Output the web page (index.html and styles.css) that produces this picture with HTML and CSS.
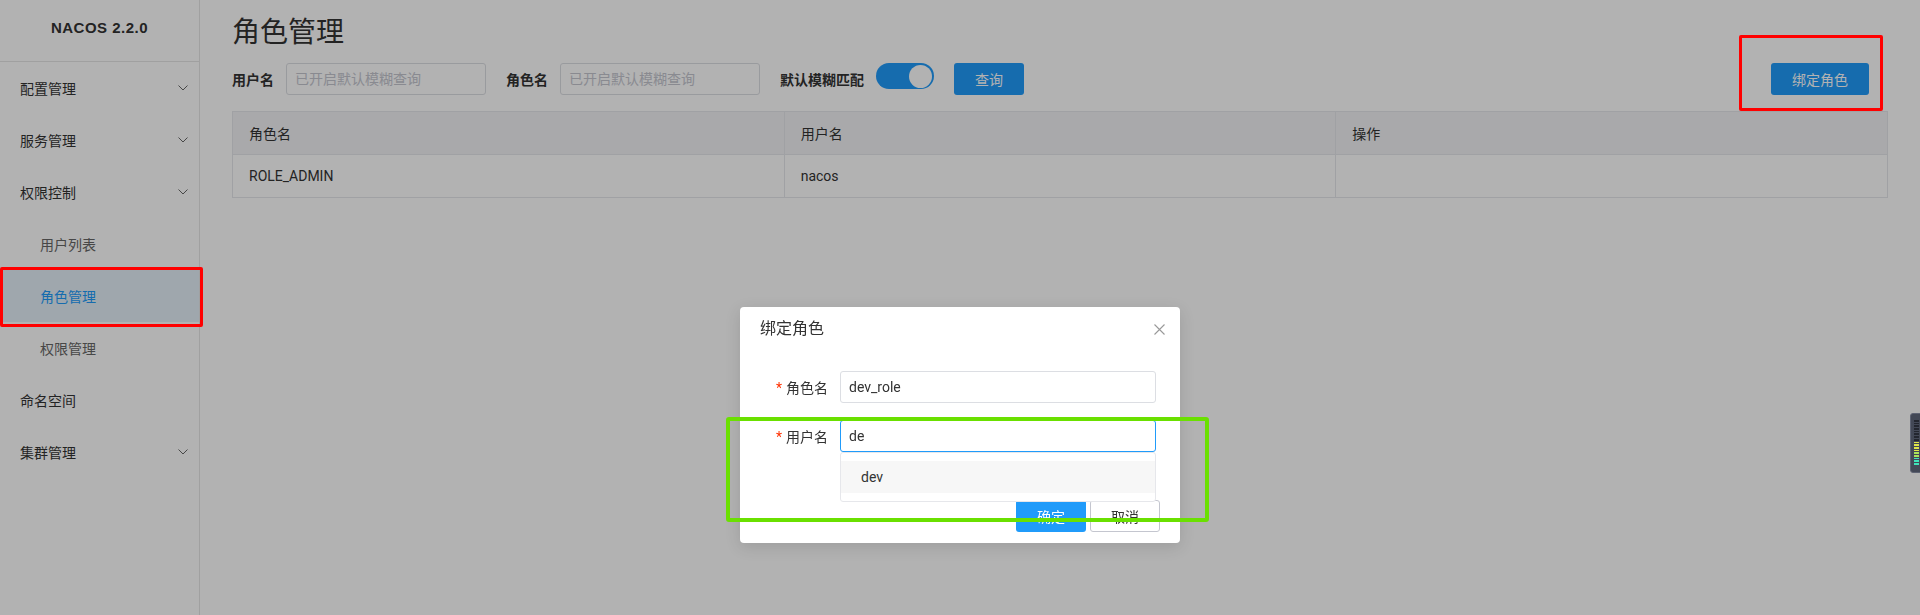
FILE: index.html
```html
<!DOCTYPE html>
<html lang="zh-CN">
<head>
<meta charset="utf-8">
<title>角色管理 - Nacos</title>
<link rel="stylesheet" href="styles.css">
</head>
<body>
<div class="app">
  <aside class="sidebar">
    <div class="logo">NACOS 2.2.0</div>
    <ul class="menu">
      <li class="menu-item"><span>配置管理</span><svg class="chev" width="10" height="6" viewBox="0 0 10 6"><path d="M0.5 0.5 L5 5 L9.5 0.5" fill="none" stroke="currentColor" stroke-width="1"/></svg></li>
      <li class="menu-item"><span>服务管理</span><svg class="chev" width="10" height="6" viewBox="0 0 10 6"><path d="M0.5 0.5 L5 5 L9.5 0.5" fill="none" stroke="currentColor" stroke-width="1"/></svg></li>
      <li class="menu-item"><span>权限控制</span><svg class="chev" width="10" height="6" viewBox="0 0 10 6"><path d="M0.5 0.5 L5 5 L9.5 0.5" fill="none" stroke="currentColor" stroke-width="1"/></svg></li>
      <li class="menu-item sub"><span>用户列表</span></li>
      <li class="menu-item sub active"><span>角色管理</span></li>
      <li class="menu-item sub"><span>权限管理</span></li>
      <li class="menu-item"><span>命名空间</span></li>
      <li class="menu-item"><span>集群管理</span><svg class="chev" width="10" height="6" viewBox="0 0 10 6"><path d="M0.5 0.5 L5 5 L9.5 0.5" fill="none" stroke="currentColor" stroke-width="1"/></svg></li>
    </ul>
  </aside>
  <main class="main">
    <h1 class="page-title">角色管理</h1>
    <div class="search">
      <label class="s-label">用户名</label>
      <input class="s-input" placeholder="已开启默认模糊查询">
      <label class="s-label">角色名</label>
      <input class="s-input" placeholder="已开启默认模糊查询">
      <label class="s-label">默认模糊匹配</label>
      <span class="switch"><span class="knob"></span></span>
      <button class="btn primary query">查询</button>
      <button class="btn primary bind">绑定角色</button>
    </div>
    <table class="grid">
      <thead>
        <tr><th>角色名</th><th>用户名</th><th>操作</th></tr>
      </thead>
      <tbody>
        <tr><td>ROLE_ADMIN</td><td>nacos</td><td></td></tr>
      </tbody>
    </table>
  </main>
</div>

<div class="mask"></div>
<div class="mark-red mark-menu"></div>
<div class="mark-red mark-bind"></div>

<div class="dialog">
  <div class="dlg-head">绑定角色
    <svg class="close" width="11" height="11" viewBox="0 0 11 11"><path d="M0.5 0.5 L10.5 10.5 M10.5 0.5 L0.5 10.5" stroke="#999" stroke-width="1.1" fill="none"/></svg>
  </div>
  <div class="dlg-body">
    <div class="f-item">
      <label class="f-label"><i class="req">*</i>角色名</label>
      <div class="f-ctrl"><input class="f-input" value="dev_role"></div>
    </div>
    <div class="f-item">
      <label class="f-label"><i class="req">*</i>用户名</label>
      <div class="f-ctrl">
        <input class="f-input focused" value="de">
        <ul class="dropdown"><li class="dd-item">dev</li></ul>
      </div>
    </div>
  </div>
  <div class="dlg-foot">
    <button class="btn primary">确定</button>
    <button class="btn normal">取消</button>
  </div>
</div>

<div class="mark-green"></div>

<div class="meter">
  <span class="bar off"></span><span class="bar off"></span><span class="bar off"></span><span class="bar off"></span><span class="bar off"></span><span class="bar off"></span><span class="bar off"></span><span class="bar off"></span>
  <span class="bar yel"></span><span class="bar yel"></span><span class="bar yel"></span><span class="bar yel"></span>
  <span class="bar lime"></span><span class="bar lime"></span>
  <span class="bar teal"></span><span class="bar teal"></span><span class="bar teal"></span>
</div>
</body>
</html>
```

FILE: styles.css
```css
* { box-sizing: border-box; }
html, body { margin: 0; padding: 0; }
body {
  width: 1920px;
  height: 615px;
  overflow: hidden;
  background: #fff;
  font-family: Roboto, "Noto Sans CJK SC", sans-serif;
  font-size: 14px;
  color: #333;
}

.app {
  display: flex;
  height: 615px;
}

/* Sidebar */
.sidebar {
  width: 200px;
  flex: none;
  border-right: 1px solid #e6e6e6;
  background: #fff;
}
.logo {
  height: 62px;
  border-bottom: 1px solid #e6e6e6;
  text-align: center;
  line-height: 56px;
  font-family: "Liberation Sans", Arial, sans-serif;
  font-weight: bold;
  font-size: 15px;
  letter-spacing: 0.5px;
  color: #333;
}
.menu {
  list-style: none;
  margin: 0;
  padding: 0;
}
.menu-item {
  height: 52px;
  display: flex;
  align-items: center;
  justify-content: space-between;
  padding: 0 11px 0 20px;
  font-size: 14px;
  color: #333;
}
.menu-item.sub {
  padding-left: 40px;
  color: #666;
}
.menu-item.active {
  background: #e4f0f8;
  color: #209bfa;
}
.chev { color: #666; display: block; }

/* Main */
.main {
  flex: 1;
  padding: 0 32px;
  min-width: 0;
}
.page-title {
  margin: 13px 0 0;
  height: 40px;
  line-height: 40px;
  font-size: 28px;
  font-weight: normal;
  color: #333;
}
.search {
  display: flex;
  align-items: center;
  height: 32px;
  margin-top: 10px;
}
.s-label {
  font-weight: bold;
  font-size: 14px;
  color: #333;
  padding-right: 12px;
}
.s-input {
  width: 200px;
  height: 32px;
  border: 1px solid #dcdee3;
  border-radius: 3px;
  padding: 0 8px;
  font: inherit;
  font-size: 14px;
  margin-right: 20px;
  outline: none;
}
.s-input::placeholder { color: #c4c6cf; }

.switch {
  align-self: flex-start;
  width: 58px;
  height: 26px;
  border-radius: 13px;
  background: #209bfa;
  display: flex;
  align-items: center;
  justify-content: flex-end;
  padding-right: 2px;
  margin-right: 20px;
}
.knob {
  width: 23px;
  height: 23px;
  border-radius: 50%;
  background: #fff;
}

.btn {
  height: 32px;
  border-radius: 3px;
  font: inherit;
  font-size: 14px;
  padding: 0 20px;
  border: 1px solid transparent;
  cursor: pointer;
}
.btn.primary {
  background: #209bfa;
  color: #fff;
}
.btn.normal {
  background: #fff;
  color: #333;
  border-color: #c4c6cf;
}
.query { width: 70px; padding: 0; }
.bind {
  margin-left: auto;
  margin-right: 19px;
  width: 98px;
  padding: 0;
}

/* Table */
.grid {
  width: 100%;
  margin-top: 16px;
  border-collapse: collapse;
  table-layout: fixed;
  border: 1px solid #e6e7eb;
}
.grid th, .grid td {
  border: 1px solid #e6e7eb;
  height: 43px;
  padding: 0 16px;
  text-align: left;
  font-weight: normal;
  font-size: 14px;
  color: #333;
}
.grid th { background: #f2f3f5; }

/* Overlay */
.mask {
  position: fixed;
  inset: 0;
  background: rgba(0, 0, 0, 0.3);
}

.mark-red {
  position: absolute;
  border: 3px solid #ff0000;
  border-radius: 2px;
}
.mark-menu { left: 0; top: 267px; width: 203px; height: 60px; }
.mark-bind { left: 1739px; top: 35px; width: 144px; height: 76px; }

.mark-green {
  position: absolute;
  left: 726px;
  top: 417px;
  width: 483px;
  height: 105px;
  border: 4px solid #6ae000;
  border-radius: 3px;
}

/* Dialog */
.dialog {
  position: absolute;
  left: 740px;
  top: 307px;
  width: 440px;
  background: #fff;
  border-radius: 4px;
  box-shadow: 0 4px 16px rgba(0, 0, 0, 0.12);
}
.dlg-head {
  position: relative;
  height: 44px;
  line-height: 44px;
  padding: 0 20px;
  font-size: 16px;
  color: #333;
}
.close {
  position: absolute;
  right: 15px;
  top: 17px;
}
.dlg-body {
  padding: 20px 24px 36px 20px;
}
.f-item {
  display: flex;
  align-items: center;
  margin-bottom: 17px;
}
.f-label {
  width: 80px;
  padding-right: 12px;
  text-align: right;
  font-size: 14px;
  color: #333;
}
.req {
  font-style: normal;
  color: #ff3000;
  margin-right: 4px;
}
.f-ctrl {
  position: relative;
  width: 316px;
}
.f-input {
  display: block;
  width: 316px;
  height: 32px;
  border: 1px solid #dcdee3;
  border-radius: 3px;
  padding: 0 8px;
  font: inherit;
  font-size: 14px;
  color: #333;
  outline: none;
}
.f-input.focused { border-color: #209bfa; }
.dropdown {
  position: absolute;
  left: 0;
  top: 100%;
  width: 316px;
  margin: 0;
  padding: 8px 0;
  list-style: none;
  background: #fff;
  border: 1px solid #e6e7eb;
  border-radius: 3px;
  z-index: 2;
}
.dd-item {
  height: 32px;
  line-height: 32px;
  padding-left: 20px;
  background: #f7f7f7;
  color: #333;
}
.dlg-foot {
  display: flex;
  justify-content: flex-end;
  gap: 4px;
  padding: 12px 20px 11px;
  margin-top: -17px;
}
.dlg-foot .btn { width: 70px; padding: 0; }

/* Right-edge level meter widget */
.meter {
  position: absolute;
  left: 1910px;
  top: 413px;
  width: 14px;
  height: 60px;
  background: #434856;
  border: 1px solid #5d6272;
  border-radius: 3px;
  padding: 6px 0 0 3px;
  display: flex;
  flex-direction: column;
  gap: 1px;
}
.bar {
  display: block;
  width: 5px;
  height: 1.7px;
}
.bar.off { background: #23262f; }
.bar.yel { background: #dfe64a; }
.bar.lime { background: #a9e65a; }
.bar.teal { background: #3fe3b9; }
```
